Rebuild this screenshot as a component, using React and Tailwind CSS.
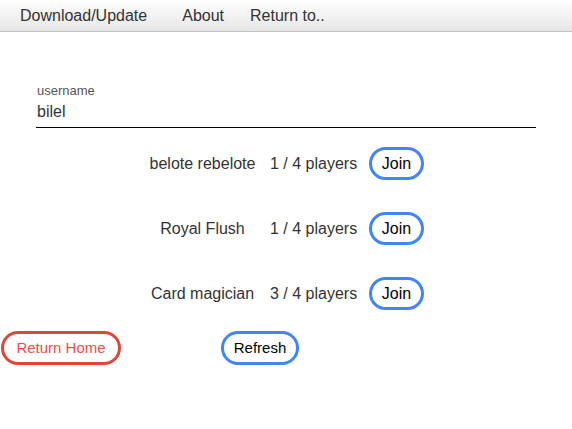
import React from 'react';

const rooms = [
  { name: 'belote rebelote', players: '1 / 4 players' },
  { name: 'Royal Flush', players: '1 / 4 players' },
  { name: 'Card magician', players: '3 / 4 players' },
];

const App = () => {
  return (
    <div className="min-h-[429px] bg-white text-[#333] font-['Liberation_Sans',Arial,sans-serif]">
      {/* Top menu */}
      <nav className="flex h-[32px] items-center border-b border-[#c4c4c4] bg-gradient-to-b from-white to-[#e6e6e6] pl-[20px] text-[16px] text-[#333]">
        <span>Download/Update</span>
        <span className="ml-[35px]">About</span>
        <span className="ml-[26px]">Return to..</span>
      </nav>

      {/* Username field */}
      <div className="mx-[36px] mt-[52px]">
        <label className="block pl-[1px] text-[13px] leading-[14px] text-[#555]">username</label>
        <div className="mt-[5px] border-b-[1.5px] border-black pb-[6px] pl-[1px] text-[16px] leading-[18px] text-[#333]">
          bilel
        </div>
      </div>

      {/* Rooms */}
      <div className="mt-[19px] flex justify-center">
        <div className="-ml-[3px] grid grid-cols-[113px_88px_54px] items-center gap-x-[11px] gap-y-[32px] whitespace-nowrap text-[16px]">
          {rooms.map((room) => (
            <React.Fragment key={room.name}>
              <div className="text-center">{room.name}</div>
              <div>{room.players}</div>
              <button
                type="button"
                className="h-[33px] w-[55px] rounded-full border-[3px] border-[#4285f4] bg-white text-[16px] text-black"
              >
                Join
              </button>
            </React.Fragment>
          ))}
        </div>
      </div>

      {/* Bottom actions */}
      <div className="mt-[21px] flex items-center">
        <button
          type="button"
          className="ml-[1px] h-[34px] w-[120px] whitespace-nowrap rounded-full border-[3px] border-[#e0453a] bg-white text-[15px] text-[#e8504a]"
        >
          Return Home
        </button>
        <button
          type="button"
          className="ml-[100px] h-[34px] w-[78px] rounded-full border-[3px] border-[#4285f4] bg-white text-[15px] text-black"
        >
          Refresh
        </button>
      </div>
    </div>
  );
};

export default App;
